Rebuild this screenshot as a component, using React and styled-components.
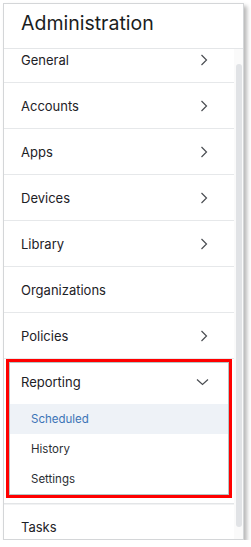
import React from 'react'
import styled, { createGlobalStyle } from 'styled-components'

const GlobalStyle = createGlobalStyle`
  html, body {
    margin: 0;
    background: #ffffff;
    font-family: Inter, "Noto Sans", sans-serif;
  }
`

const menu = [
  { label: 'General', arrow: true },
  { label: 'Accounts', arrow: true },
  { label: 'Apps', arrow: true },
  { label: 'Devices', arrow: true },
  { label: 'Library', arrow: true },
  { label: 'Organizations', arrow: false },
  { label: 'Policies', arrow: true },
]

const reporting = [
  { label: 'Scheduled', active: true },
  { label: 'History' },
  { label: 'Settings' },
]

const ChevronRight = () => (
  <svg width="8" height="12" viewBox="0 0 8 12">
    <polyline points="1.5,1 6.5,6 1.5,11" fill="none" stroke="#4a4d52" strokeWidth="1.2" />
  </svg>
)

const ChevronDown = () => (
  <svg width="13" height="8" viewBox="0 0 13 8">
    <polyline points="1,1.5 6.5,6.5 12,1.5" fill="none" stroke="#4a4d52" strokeWidth="1.2" />
  </svg>
)

export default function App() {
  return (
    <>
      <GlobalStyle />
      <Panel>
        <Header>Administration</Header>
        <Body>
          <List>
            <Scroller>
              {menu.map(({ label, arrow }) => (
                <Item key={label}>
                  <span>{label}</span>
                  {arrow && <ChevronRight />}
                </Item>
              ))}
              <GroupItem>
                <Group>
                  <GroupHead>
                    <span>Reporting</span>
                    <ChevronDown />
                  </GroupHead>
                  {reporting.map(({ label, active }) => (
                    <SubItem key={label} $active={active}>{label}</SubItem>
                  ))}
                </Group>
              </GroupItem>
              <Item>
                <span>Tasks</span>
              </Item>
            </Scroller>
          </List>
          <Track>
            <Thumb />
          </Track>
        </Body>
      </Panel>
    </>
  )
}

const Panel = styled.div`
  margin: 3px 0 0 3px;
  width: 239px;
  height: 535px;
  border: 1px solid #d4d6d8;
  background: #fff;
  box-shadow: 3px 3px 4px rgba(0, 0, 0, 0.28);
  display: flex;
  flex-direction: column;
  overflow: hidden;
`
const Header = styled.div`
  height: 45px;
  flex: none;
  box-sizing: border-box;
  padding: 5px 0 0 17px;
  font-size: 19.5px;
  line-height: 28px;
  color: #1a1d21;
  border-bottom: 1px solid #e4e6e8;
`
const Body = styled.div`
  flex: 1;
  display: flex;
  min-height: 0;
`
const List = styled.div`
  flex: 1;
  overflow: hidden;
`
const Scroller = styled.ul`
  list-style: none;
  margin: -12px 0 0;
  padding: 0;
`
const Item = styled.li`
  height: 45px;
  border-bottom: 1px solid #e6e8ea;
  padding: 0 26px 0 17px;
  display: flex;
  align-items: center;
  justify-content: space-between;
  font-size: 13px;
  color: #1d2126;
`
const GroupItem = styled.li`
  padding: 3px 5px 8px;
  border-bottom: 1px solid #e3e5e7;
  box-shadow: 0 1px 0 #f1f2f3;
`
const Group = styled.div`
  outline: 3px solid #ff0000;
  border: 1px solid #b4c6c6;
  display: flex;
  flex-direction: column;
`
const GroupHead = styled.div`
  height: 41px;
  box-sizing: border-box;
  padding: 0 19px 3px 11px;
  display: flex;
  align-items: center;
  justify-content: space-between;
  font-size: 13px;
  color: #1d2126;
`
const SubItem = styled.div`
  height: 30px;
  padding-left: 21px;
  display: flex;
  align-items: center;
  font-size: 11.5px;
  color: ${p => (p.$active ? '#3c74b6' : '#2a2e33')};
  background: ${p => (p.$active ? '#eef2f7' : 'transparent')};
`
const Track = styled.div`
  width: 9px;
  flex: none;
  background: #fafafa;
`
const Thumb = styled.div`
  margin: 15px 0 0 2px;
  width: 6px;
  height: 463px;
  border-radius: 3px;
  background: #e1e3e6;
`
